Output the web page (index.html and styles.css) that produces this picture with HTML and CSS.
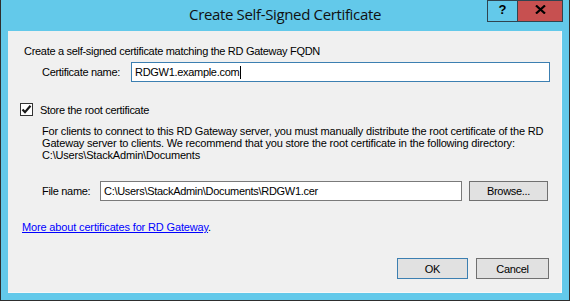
FILE: index.html
```html
<!DOCTYPE html>
<html>
<head>
<meta charset="utf-8">
<link rel="stylesheet" href="styles.css">
</head>
<body>
<div class="window">
  <div class="titlebar">
    <div class="tb-left"></div>
    <div class="title">Create Self-Signed Certificate</div>
    <div class="tb-right">
      <div class="cap-btn help">?</div>
      <div class="cap-btn close">
        <svg width="11" height="9" viewBox="0 0 11 9"><path d="M1 0.5 L10 8.5 M10 0.5 L1 8.5" stroke="#000" stroke-width="2.2" fill="none"/></svg>
      </div>
    </div>
  </div>
  <div class="client">
    <div class="intro">Create a self-signed certificate matching the RD Gateway FQDN</div>
    <div class="row cert-row">
      <span class="label cert-label">Certificate name:</span>
      <div class="input focused cert-input"><span>RDGW1.example.com</span><span class="caret"></span></div>
    </div>
    <div class="check-row">
      <span class="checkbox">
        <svg width="11" height="11" viewBox="0 0 11 11"><path d="M1.5 5.5 L4 8.2 L9.5 1.8" stroke="#1a1a1a" stroke-width="2.2" fill="none"/></svg>
      </span>
      <span>Store the root certificate</span>
    </div>
    <p class="para">For clients to connect to this RD Gateway server, you must manually distribute the root certificate of the RD<br>Gateway server to clients. We recommend that you store the root certificate in the following directory:<br>C:\Users\StackAdmin\Documents</p>
    <div class="row file-row">
      <span class="label file-label">File name:</span>
      <div class="input file-input">C:\Users\StackAdmin\Documents\RDGW1.cer</div>
      <div class="btn browse">Browse...</div>
    </div>
    <div class="link-row"><a class="link" href="#">More about certificates for RD Gateway</a>.</div>
    <div class="footer">
      <div class="btn default ok">OK</div>
      <div class="btn cancel">Cancel</div>
    </div>
  </div>
</div>
</body>
</html>
```

FILE: styles.css
```css
* { box-sizing: border-box; }
html, body { margin: 0; padding: 0; }
body {
  width: 570px;
  height: 301px;
  overflow: hidden;
  font-family: "Liberation Sans", Arial, sans-serif;
  font-size: 11px;
  letter-spacing: -0.3px;
  color: #000;
}
.window {
  width: 570px;
  height: 301px;
  background: #63c9ea;
  border-left: 1px solid #2e2e2e;
  border-right: 1px solid #2e2e2e;
  border-bottom: 1px solid #2e2e2e;
  display: flex;
  flex-direction: column;
}
.titlebar {
  height: 31px;
  display: grid;
  grid-template-columns: 1fr auto 1fr;
}
.title {
  font-family: "Open Sans", "Noto Sans", sans-serif;
  font-size: 15px;
  line-height: 29px;
  color: #111;
  letter-spacing: -0.35px;
}
.tb-right {
  display: flex;
  justify-content: flex-end;
  align-items: flex-start;
  padding-right: 6px;
}
.cap-btn {
  height: 22px;
  border: 1px solid #2f4450;
  display: flex;
  align-items: center;
  justify-content: center;
  letter-spacing: 0;
}
.help {
  width: 30px;
  border-right: none;
  font-family: "Liberation Sans", Arial, sans-serif;
  font-weight: bold;
  font-size: 13px;
  padding-bottom: 3px;
}
.close {
  width: 46px;
  background: #c75050;
  padding-bottom: 3px;
}
.client {
  margin: 0 7px 7px 7px;
  height: 262px;
  background: #f0f0f0;
  border-right: 1px solid #f7f7f7;
  border-bottom: 1px solid #f7f7f7;
  display: flex;
  flex-direction: column;
}
.intro {
  margin-top: 14px;
  padding-left: 16px;
  line-height: 13px;
}
.row {
  display: flex;
  align-items: center;
  height: 20px;
}
.cert-row { margin-top: 4px; padding-left: 34px; }
.cert-label { width: 89px; }
.input {
  height: 20px;
  background: #fff;
  border: 1px solid #7a7a7a;
  padding-left: 3px;
  line-height: 18px;
  white-space: nowrap;
  display: flex;
  align-items: center;
}
.focused { border-color: #3c7fb1; }
.cert-input { width: 419px; }
.caret {
  display: inline-block;
  width: 1px;
  height: 13px;
  background: #000;
  margin-left: 1px;
}
.check-row {
  margin-top: 21px;
  padding-left: 12px;
  display: flex;
  align-items: center;
  gap: 7px;
  height: 13px;
}
.checkbox {
  width: 13px;
  height: 13px;
  background: #fff;
  border: 1px solid #333;
  display: flex;
  align-items: center;
  justify-content: center;
}
.para {
  margin: 9px 0 0 0;
  padding-left: 34px;
  line-height: 12px;
  white-space: nowrap;
  letter-spacing: -0.18px;
}
.file-row { margin-top: 20px; padding-left: 34px; }
.file-label { width: 58px; }
.file-input { width: 362px; }
.btn {
  height: 20px;
  background: #e1e1e1;
  border: 1px solid #707070;
  display: flex;
  align-items: center;
  justify-content: center;
}
.browse { width: 79px; margin-left: 7px; }
.link-row {
  margin-top: 20px;
  padding-left: 14px;
  line-height: 13px;
  letter-spacing: -0.15px;
}
.link { color: #0000ff; text-decoration: underline; }
.footer {
  margin-top: auto;
  padding: 0 12px 13px 0;
  display: flex;
  justify-content: flex-end;
  gap: 8px;
}
.footer .btn { height: 21px; }
.default { border-color: #3c7fb1; }
.ok { width: 71px; }
.cancel { width: 73px; }
```
